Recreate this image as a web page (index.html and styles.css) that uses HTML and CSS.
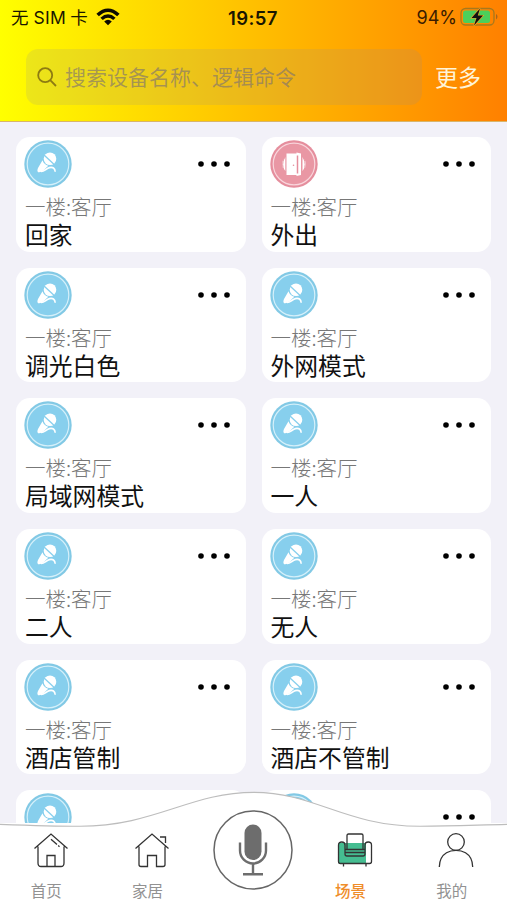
FILE: index.html
```html
<!DOCTYPE html>
<html lang="zh-CN">
<head>
<meta charset="utf-8">
<title>场景</title>
<link rel="stylesheet" href="styles.css">
</head>
<body>
<svg class="defs" aria-hidden="true">
  <symbol id="mic" viewBox="0 0 48 48">
    <circle cx="24" cy="24" r="23.7" fill="#82c9e5"/>
    <circle cx="24" cy="24" r="20.8" fill="#87cfed" stroke="#d5f0fa" stroke-width="1.2"/>
    <circle cx="26" cy="18.800" r="6.300" fill="#fff"/>
    <path d="M19.200 14.300 30.500 24.800" stroke="#87cfed" stroke-width="1.300" fill="none"/>
    <path d="M18.500 20.300C19.300 23 21.500 25.200 24.300 25.800L19.500 30.200Q16.500 32.800 14.200 32.200Q12.700 31.200 14 28Z" fill="#fff"/>
    <path d="M17 31.500C20 31.800 22.500 28.300 25.400 27.600C28.800 26.900 31 28 31.200 31.800" stroke="#fff" stroke-width="1.600" fill="none"/>
  </symbol>
  <symbol id="door" viewBox="0 0 48 48">
    <circle cx="24" cy="24" r="23.7" fill="#e58e9d"/>
    <circle cx="24" cy="24" r="20.8" fill="#e997a4" stroke="#f9d6dc" stroke-width="1.2"/>
    <path d="M15.300 17.300Q8.500 24.500 15.300 31ZM32.500 17.300Q39.500 24.500 32.500 31Z" fill="#fff"/>
    <path d="M14.300 18Q11 24.500 14.300 31M33.500 18Q36.800 24.500 33.500 31" stroke="#e997a4" stroke-width="1" fill="none"/>
    <path d="M16.500 13.500H26.500V12.500L31 13.500V35L26.500 36V35H16.500Z" fill="#fff"/>
    <path d="M27.500 15.500V33.500" stroke="#e58e9d" stroke-width="1.500"/>
    <circle cx="23.500" cy="25.300" r=".8" fill="#e58e9d"/>
  </symbol>
  <symbol id="more" viewBox="0 0 34 8">
    <circle cx="4" cy="4" r="2.8"/><circle cx="17" cy="4" r="2.8"/><circle cx="30" cy="4" r="2.8"/>
  </symbol>
</svg>
<div class="screen">
  <header class="header">
    <div class="status">
      <div class="carrier"><span>无</span><span class="sim">SIM</span><span>卡</span>
        <svg class="wifi" viewBox="0 0 24 18"><path d="M0.4 5.8Q12-4.6 23.6 5.8L21.1 8.3Q12-.3 2.9 8.3ZM4.4 9.7Q12 2.9 19.6 9.7L17.2 12.1Q12 7.5 6.8 12.1ZM8.2 13.4Q12 10.2 15.8 13.4L12 17.2Z"/></svg>
      </div>
      <div class="clock">19:57</div>
      <div class="power"><span>94%</span>
        <svg class="battery" viewBox="0 0 38 20">
          <rect x="1" y="1.5" width="33" height="16.5" rx="4.5" fill="none" stroke="#a6791d" stroke-width="1.3"/>
          <rect x="3" y="3.5" width="27" height="12.5" rx="2.5" fill="#4bcf5b"/>
          <path d="M36 7V12.5Q37.5 11.5 37.5 9.7T36 7" fill="#a6661d"/>
          <path d="M20 1.5 11.5 11H16.5L14 18.5 23 8.5H17.8Z" fill="#111" stroke="#f5a523" stroke-width="1.2" paint-order="stroke"/>
        </svg>
      </div>
    </div>
    <div class="tools">
      <div class="search">
        <svg class="glass" viewBox="0 0 20 20"><circle cx="8.2" cy="8.2" r="7" /><path d="M13.2 13.2 19 19"/></svg>
        <span>搜索设备名称、逻辑命令</span>
      </div>
      <div class="more-link">更多</div>
    </div>
  </header>
  <main class="grid">
    <article class="card"><div class="top"><svg class="badge"><use href="#mic"/></svg><svg class="dots"><use href="#more"/></svg></div><p class="room">一楼:客厅</p><h2>回家</h2></article>
    <article class="card"><div class="top"><svg class="badge"><use href="#door"/></svg><svg class="dots"><use href="#more"/></svg></div><p class="room">一楼:客厅</p><h2>外出</h2></article>
    <article class="card"><div class="top"><svg class="badge"><use href="#mic"/></svg><svg class="dots"><use href="#more"/></svg></div><p class="room">一楼:客厅</p><h2>调光白色</h2></article>
    <article class="card"><div class="top"><svg class="badge"><use href="#mic"/></svg><svg class="dots"><use href="#more"/></svg></div><p class="room">一楼:客厅</p><h2>外网模式</h2></article>
    <article class="card"><div class="top"><svg class="badge"><use href="#mic"/></svg><svg class="dots"><use href="#more"/></svg></div><p class="room">一楼:客厅</p><h2>局域网模式</h2></article>
    <article class="card"><div class="top"><svg class="badge"><use href="#mic"/></svg><svg class="dots"><use href="#more"/></svg></div><p class="room">一楼:客厅</p><h2>一人</h2></article>
    <article class="card"><div class="top"><svg class="badge"><use href="#mic"/></svg><svg class="dots"><use href="#more"/></svg></div><p class="room">一楼:客厅</p><h2>二人</h2></article>
    <article class="card"><div class="top"><svg class="badge"><use href="#mic"/></svg><svg class="dots"><use href="#more"/></svg></div><p class="room">一楼:客厅</p><h2>无人</h2></article>
    <article class="card"><div class="top"><svg class="badge"><use href="#mic"/></svg><svg class="dots"><use href="#more"/></svg></div><p class="room">一楼:客厅</p><h2>酒店管制</h2></article>
    <article class="card"><div class="top"><svg class="badge"><use href="#mic"/></svg><svg class="dots"><use href="#more"/></svg></div><p class="room">一楼:客厅</p><h2>酒店不管制</h2></article>
    <article class="card"><div class="top"><svg class="badge"><use href="#mic"/></svg><svg class="dots"><use href="#more"/></svg></div></article>
    <article class="card"><div class="top"><svg class="badge"><use href="#mic"/></svg><svg class="dots"><use href="#more"/></svg></div></article>
  </main>
  <nav class="tabbar">
    <svg class="curve" viewBox="0 0 507 110"><rect y="33" width="507" height="77" fill="#fff"/><path d="M-2 34.3C30 35.5 55 36.3 80 36.3C155 36.3 190 2.4 254 2.4C315 2.4 345 36.2 420 36.2C455 36.2 480 34.8 509 34.3V112H-2Z" fill="#fff" stroke="#bdbdbd" stroke-width="1.1"/></svg>
    <div class="tabs">
      <div class="tab">
        <svg class="icon" viewBox="0 0 36 36"><path d="M1.5 16.5 18 2 34.5 16.5M5 14.5V31Q5 34.5 8 34.5H28Q31 34.5 31 31V14.5M14 34V23.5H22V34M18 7.2 24 12.5M25.2 13.6 26.5 14.8"/></svg>
        <span>首页</span>
      </div>
      <div class="tab">
        <svg class="icon" viewBox="0 0 36 36"><path d="M1.5 16.5 18 2 34.5 16.5M5 14.5V32.5Q5 34.5 7 34.5H13.5V23.5H22.5V34.5H29Q31 34.5 31 32.5V14.5M26 5H31.5V11"/></svg>
        <span>家居</span>
      </div>
      <div class="tab voice">
        <svg viewBox="0 0 80 80"><circle cx="40" cy="40" r="39" fill="#fff" stroke="#666" stroke-width="1.5"/><rect x="31.5" y="14.5" width="17" height="35.5" rx="8.5" fill="#6d6d6d"/><path d="M27 32.5V40.5A13 13 0 0 0 53 40.5V32.5M40 53.5V64M30 64.3H50" fill="none" stroke="#6d6d6d" stroke-width="2.4"/></svg>
      </div>
      <div class="tab active">
        <svg class="icon" viewBox="0 0 36 36"><path class="fill" d="M1.500 11H29V31.500H1.500Z"/><path d="M10 17.500V3.500Q10 2 11.500 2H24.500Q26 2 26 3.500V17.500ZM10 17.500H8V13Q8 10 4.800 10Q1.500 10 1.500 13V29.500Q1.500 31.500 3.500 31.500H32.500Q34.500 31.500 34.500 29.500V13Q34.500 10 31.200 10Q28 10 28 13V17.500H26M8 17.500V22Q8 24 10 24H26Q28 24 28 22V17.500M8.500 20.500H27.500M6.500 31.500V34.500M29 31.500V34.500"/></svg>
        <span>场景</span>
      </div>
      <div class="tab">
        <svg class="icon" viewBox="0 0 36 36"><circle cx="18" cy="10" r="8.3"/><path d="M1.300 35Q1.500 25 8.500 20.800Q12.500 18.300 18 18.300T27.500 20.800Q34.500 25 34.700 35"/></svg>
        <span>我的</span>
      </div>
    </div>
  </nav>
</div>
</body>
</html>
```
FILE: styles.css
```css
* { box-sizing: border-box; }
body { margin: 0; font-family: Inter, "Noto Sans CJK SC", sans-serif; }
svg { display: block; flex: none; }
.defs { position: absolute; width: 0; height: 0; }
.screen { position: relative; width: 507px; height: 900px; overflow: hidden; background: #f2f1f8; }
.header { height: 122px; background: linear-gradient(90deg, #ffff00, #ff8000); border-bottom: 1px solid #d9b56a; }
.status { display: grid; grid-template-columns: 1fr auto 1fr; align-items: center; height: 34px; padding: 0 9px 0 11px; color: #1a1600; font-size: 17.5px; line-height: 34px; }
.carrier { display: flex; align-items: center; padding-top: 1px; font-weight: 400; }
.sim { margin: 0 4px 0 5px; letter-spacing: .3px; }
.wifi { width: 24px; height: 18px; margin: -2px 0 0 8px; fill: #0d0b00; }
.clock { padding-right: 3px; font-weight: 600; font-size: 18.5px; letter-spacing: .4px; }
.power { display: flex; align-items: center; justify-content: flex-end; color: #3a1c00; font-size: 18px; }
.battery { width: 38px; height: 20px; margin: -2px 0 0 3px; }
.tools { display: flex; align-items: center; height: 56px; margin-top: 15px; padding-left: 26px; }
.search { display: flex; align-items: center; width: 396px; height: 56px; padding: 0 0 1px 11px; border-radius: 12px; background: rgba(142, 142, 147, .17); color: rgba(130, 118, 110, .66); font-size: 21px; line-height: 56px; }
.search span { padding-top: 2px; }
.glass { width: 20px; height: 20px; margin-right: 8px; fill: none; stroke: #8d7b12; stroke-width: 1.8; }
.more-link { margin-left: 13px; padding-top: 1px; color: #fff4d8; font-size: 23px; line-height: 54px; }
.grid { display: grid; grid-template-columns: 230px 229.5px; grid-auto-rows: 114.7px; gap: 16px 15.5px; padding: 15px 0 0 16px; }
.card { padding: 3px 15px 0 8px; border-radius: 14px; background: #fff; }
.top { display: flex; align-items: center; justify-content: space-between; height: 48px; }
.badge { width: 48px; height: 48px; }
.dots { width: 34px; height: 8px; }
.room, h2 { margin: 0; padding-left: 1px; white-space: nowrap; }
.room { margin-top: 4px; color: #777; font-size: 20.5px; line-height: 29px; font-weight: 300; font-family: "Noto Sans CJK SC", sans-serif; }
h2 { margin-top: 2px; color: #111; font-size: 23.8px; font-weight: 400; line-height: 26px; }
.tabbar { position: absolute; left: 0; bottom: 0; width: 507px; height: 110px; }
.curve { position: absolute; left: 0; top: 0; width: 507px; height: 110px; }
.tabs { position: relative; display: grid; grid-template-columns: repeat(5, 1fr); height: 110px; }
.tab { display: flex; flex-direction: column; align-items: center; padding-top: 42px; color: #929292; font-size: 15.5px; line-height: 20px; }
.tab span { margin: 14px 9px 0 0; }
.icon { width: 36px; height: 36px; fill: none; stroke: #333; stroke-width: 1.3; }
.fill { fill: #45bd91; stroke: none; }
.active { color: #ef8d2a; font-weight: 500; }
.voice { padding-top: 20px; }
.voice svg { width: 80px; height: 80px; }
```
